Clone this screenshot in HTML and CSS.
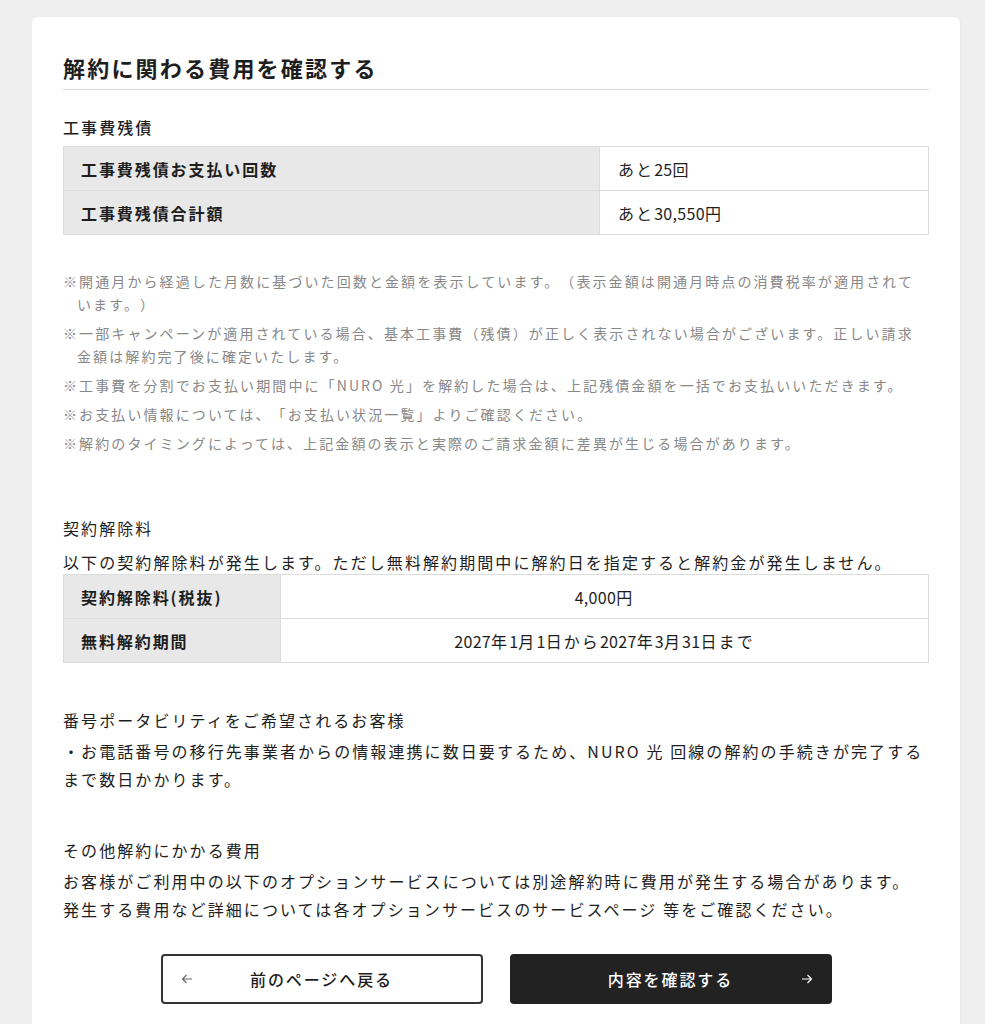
FILE: index.html
```html
<!DOCTYPE html>
<html lang="ja">

<head>
    <meta charset="UTF-8">
    <title>解約に関わる費用を確認する</title>
    <link rel="stylesheet" href="styles.css">
</head>

<body>
<div class="card">
    <h1 class="page-title">解約に関わる費用を確認する</h1>

    <h2 class="sec-title first">工事費残債</h2>
    <table class="info-table">
        <tr>
            <th class="wide">工事費残債お支払い回数</th>
            <td>あと<span class="num">25</span>回</td>
        </tr>
        <tr>
            <th class="wide">工事費残債合計額</th>
            <td>あと<span class="num">30,550</span>円</td>
        </tr>
    </table>

    <ul class="notes">
        <li>※開通月から経過した月数に基づいた回数と金額を表示しています。（表示金額は開通月時点の消費税率が適用されています。）</li>
        <li>※一部キャンペーンが適用されている場合、基本工事費（残債）が正しく表示されない場合がございます。正しい請求金額は解約完了後に確定いたします。</li>
        <li>※工事費を分割でお支払い期間中に「NURO 光」を解約した場合は、上記残債金額を一括でお支払いいただきます。</li>
        <li>※お支払い情報については、「お支払い状況一覧」よりご確認ください。</li>
        <li>※解約のタイミングによっては、上記金額の表示と実際のご請求金額に差異が生じる場合があります。</li>
    </ul>

    <h2 class="sec-title fee">契約解除料</h2>
    <p class="desc">以下の契約解除料が発生します。ただし無料解約期間中に解約日を指定すると解約金が発生しません。</p>
    <table class="info-table center">
        <tr>
            <th class="narrow">契約解除料(税抜)</th>
            <td><span class="num">4,000</span>円</td>
        </tr>
        <tr>
            <th class="narrow">無料解約期間</th>
            <td><span class="num">2027</span>年<span class="num">1</span>月<span class="num">1</span>日から<span class="num">2027</span>年<span class="num">3</span>月<span class="num">31</span>日まで</td>
        </tr>
    </table>

    <h2 class="sec-title block">番号ポータビリティをご希望されるお客様</h2>
    <p class="body-text">・お電話番号の移行先事業者からの情報連携に数日要するため、NURO 光 回線の解約の手続きが完了するまで数日かかります。</p>

    <h2 class="sec-title block">その他解約にかかる費用</h2>
    <p class="body-text">お客様がご利用中の以下のオプションサービスについては別途解約時に費用が発生する場合があります。<br>発生する費用など詳細については各オプションサービスのサービスページ 等をご確認ください。</p>

    <div class="actions">
        <button class="btn btn-back">
            <svg class="arrow" width="12" height="10" viewBox="0 0 12 10"><path d="M11 5H1.5M5.5 1L1.5 5l4 4" fill="none" stroke="currentColor" stroke-width="1.2"/></svg>
            <span>前のページへ戻る</span>
            <span></span>
        </button>
        <button class="btn btn-next">
            <span></span>
            <span>内容を確認する</span>
            <svg class="arrow" width="12" height="10" viewBox="0 0 12 10"><path d="M1 5h9.5M6.5 1l4 4-4 4" fill="none" stroke="currentColor" stroke-width="1.2"/></svg>
        </button>
    </div>
</div>
</body>

</html>
```

FILE: styles.css
```css
body {
    margin: 0;
    background-color: #efefef;
    color: #1e1e1e;
    font-family: "Noto Sans CJK JP", "Noto Sans", sans-serif;
    font-size: 16px;
    letter-spacing: 0.13em;
    text-spacing-trim: space-all;
}

.card {
    background-color: #fff;
    width: 866px;
    margin: 17px 0 0 32px;
    padding: 34px 31px 40px;
    border-radius: 6px 6px 0 0;
    box-shadow: 1px 0 3px rgba(0, 0, 0, .03);
}

.page-title {
    margin: 0;
    font-size: 22px;
    line-height: 32px;
    font-weight: 700;
    letter-spacing: 0.1em;
    padding-bottom: 6px;
    border-bottom: 1px solid #d9d9d9;
}

.sec-title {
    margin: 0;
    font-size: 16px;
    line-height: 24px;
    font-weight: 400;
}

.sec-title.first {
    font-weight: 500;
    margin-top: 25px;
    margin-bottom: 7px;
}

.sec-title.fee {
    margin-top: 61px;
}

.sec-title.block {
    margin-top: 45px;
}

.info-table {
    width: 100%;
    border-collapse: collapse;
}

.info-table th,
.info-table td {
    border: 1px solid #dcdcdc;
    height: 43px;
    padding: 0 18px;
    font-size: 16px;
    text-align: left;
}

.info-table th {
    background-color: #e8e8e8;
    font-weight: 700;
    letter-spacing: 0.12em;
    padding-left: 17px;
}

.info-table th.wide {
    width: 500px;
}

.info-table th.narrow {
    width: 181px;
}

.info-table.center td {
    text-align: center;
}

.num {
    letter-spacing: 0.02em;
}

.notes {
    margin: 35px 0 0;
    padding: 0;
    list-style: none;
    color: #888;
    font-size: 14px;
    line-height: 23px;
    letter-spacing: 0.15em;
}

.notes li {
    padding-left: 1em;
    text-indent: -1em;
    margin-bottom: 6px;
}

.desc {
    margin: 10px 0 0;
    line-height: 24px;
}

.body-text {
    margin: 5px 0 0;
    line-height: 28px;
}

.actions {
    display: flex;
    justify-content: center;
    gap: 27px;
    margin-top: 31px;
}

.btn {
    display: grid;
    grid-template-columns: 24px 1fr 24px;
    align-items: center;
    width: 322px;
    height: 50px;
    padding: 0 16px;
    border-radius: 4px;
    font-family: inherit;
    font-size: 16px;
    font-weight: 500;
    letter-spacing: 0.12em;
    text-align: center;
    box-sizing: border-box;
}

.btn-back {
    background-color: #fff;
    border: 2px solid #333;
    color: #1e1e1e;
}

.btn-back .arrow {
    color: #666;
    justify-self: start;
    margin-left: 2px;
}

.btn-next {
    background-color: #222;
    border: 2px solid #222;
    color: #fff;
}

.btn-next .arrow {
    justify-self: end;
    margin-right: 1px;
}
```
